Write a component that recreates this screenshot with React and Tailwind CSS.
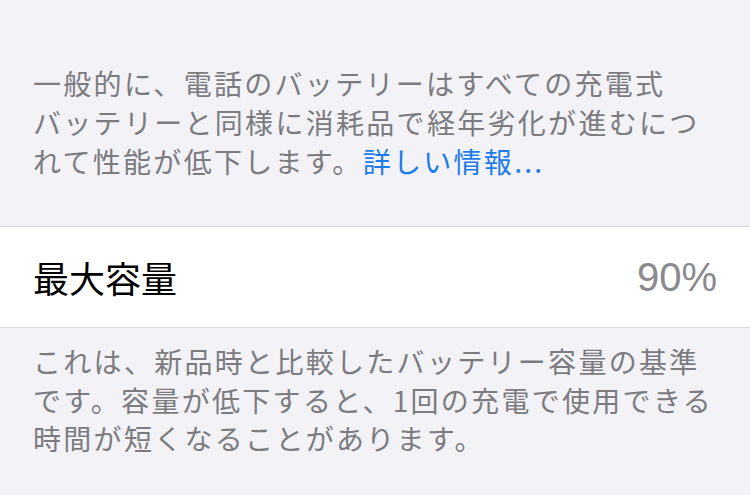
const font = {
  fontFamily: '"Noto Sans CJK JP", "Liberation Sans", sans-serif',
};

const App = () => {
  return (
    <div className="w-[750px] h-[495px] overflow-hidden bg-[#f2f2f7]" style={font}>
      {/* Top footer text */}
      <div className="pl-[33px] pr-4 pt-[64px] pb-[45px]">
        <p className="text-[28px] leading-[39px] tracking-[2.3px] text-[#7b7b80] whitespace-nowrap">
          一般的に、電話のバッテリーはすべての充電式
          <br />
          バッテリーと同様に消耗品で経年劣化が進むにつ
          <br />
          れて性能が低下します。
          <span className="text-[#1c7be8]">詳しい情報...</span>
        </p>
      </div>

      {/* Maximum capacity row */}
      <div className="bg-white border-y border-[#d9d9de] h-[102px] flex items-center justify-between pl-[33px] pr-[33px]">
        <span className="text-[36px] text-black">最大容量</span>
        <span className="text-[40px] text-[#8a8a8e]" style={{ fontFamily: '"Liberation Sans", sans-serif' }}>
          90%
        </span>
      </div>

      {/* Bottom footer text */}
      <div className="pl-[33px] pr-4 pt-[14px]">
        <p className="text-[28px] leading-[38.5px] tracking-[2.3px] text-[#7b7b80] whitespace-nowrap">
          これは、新品時と比較したバッテリー容量の基準
          <br />
          です。容量が低下すると、1回の充電で使用できる
          <br />
          時間が短くなることがあります。
        </p>
      </div>
    </div>
  );
};

export default App;
